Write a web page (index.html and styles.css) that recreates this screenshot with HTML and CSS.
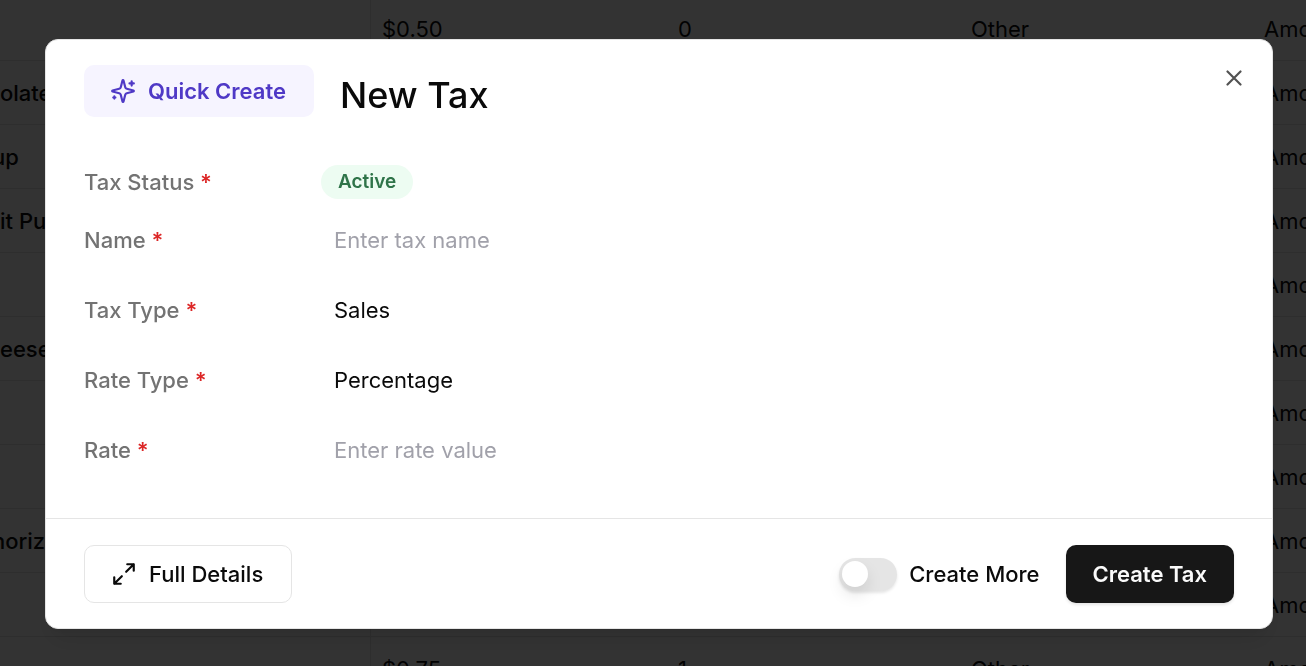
FILE: index.html
```html
<!DOCTYPE html>
<html lang="en">
<head>
<meta charset="utf-8">
<meta name="viewport" content="width=device-width, initial-scale=1">
<title>New Tax</title>
<link rel="stylesheet" href="styles.css">
</head>
<body>
<div class="page">
  <table class="modifiers">
    <colgroup><col class="col-name"><col class="col-price"><col class="col-count"><col class="col-kind"><col class="col-basis"></colgroup>
    <tbody>
      <tr><td></td><td>$0.50</td><td>0</td><td>Other</td><td>Amo</td></tr>
      <tr><td>olate</td><td></td><td></td><td></td><td>Amo</td></tr>
      <tr><td class="cut">up</td><td></td><td></td><td></td><td>Amo</td></tr>
      <tr><td>it Pu</td><td></td><td></td><td></td><td>Amo</td></tr>
      <tr><td></td><td></td><td></td><td></td><td>Amo</td></tr>
      <tr><td>eese</td><td></td><td></td><td></td><td>Amo</td></tr>
      <tr><td></td><td></td><td></td><td></td><td>Amo</td></tr>
      <tr><td></td><td></td><td></td><td></td><td>Amo</td></tr>
      <tr><td class="cut">horize</td><td></td><td></td><td></td><td>Amo</td></tr>
      <tr><td></td><td></td><td></td><td></td><td>Amo</td></tr>
      <tr><td></td><td>$0.75</td><td>1</td><td>Other</td><td>Amo</td></tr>
    </tbody>
  </table>
</div>

<div class="overlay">
  <form class="dialog" role="dialog" aria-labelledby="dialog-title">
    <header class="dialog-header">
      <span class="quick-create">
        <svg class="icon" viewBox="0 0 24 24" aria-hidden="true"><path d="M9.937 15.5A2 2 0 0 0 8.5 14.063l-6.135-1.582a.5.5 0 0 1 0-.962L8.5 9.936A2 2 0 0 0 9.937 8.5l1.582-6.135a.5.5 0 0 1 .963 0L14.063 8.5A2 2 0 0 0 15.5 9.937l6.135 1.581a.5.5 0 0 1 0 .964L15.5 14.063a2 2 0 0 0-1.437 1.437l-1.582 6.135a.5.5 0 0 1-.963 0z"/><path d="M20 3v4M22 5h-4M4 17v2M5 18H3"/></svg>
        Quick Create
      </span>
      <h1 class="title" id="dialog-title">New Tax</h1>
      <button class="close" type="button" aria-label="Close">
        <svg class="icon" viewBox="0 0 24 24" aria-hidden="true"><path d="M18 6 6 18M6 6l12 12"/></svg>
      </button>
    </header>

    <div class="fields">
      <label class="label" for="status">Tax Status <span class="required">*</span></label>
      <button class="status" id="status" type="button">Active</button>

      <label class="label" for="name">Name <span class="required">*</span></label>
      <input class="control" id="name" type="text" placeholder="Enter tax name">

      <label class="label" for="tax-type">Tax Type <span class="required">*</span></label>
      <select class="control" id="tax-type"><option>Sales</option></select>

      <label class="label" for="rate-type">Rate Type <span class="required">*</span></label>
      <select class="control" id="rate-type"><option>Percentage</option></select>

      <label class="label" for="rate">Rate <span class="required">*</span></label>
      <input class="control" id="rate" type="text" placeholder="Enter rate value">
    </div>

    <footer class="dialog-footer">
      <button class="button" type="button">
        <svg class="icon" viewBox="0 0 24 24" aria-hidden="true"><path d="M15 3h6v6M9 21H3v-6M21 3l-7 7M3 21l7-7"/></svg>
        Full Details
      </button>
      <div class="actions">
        <label class="toggle"><input class="switch" type="checkbox" role="switch">Create More</label>
        <button class="button button-primary" type="submit">Create Tax</button>
      </div>
    </footer>
  </form>
</div>
</body>
</html>
```
FILE: styles.css
```css
* {
  box-sizing: border-box;
}

body {
  margin: 0;
  height: 100vh;
  overflow: hidden;
  background: #fff;
  color: #0a0a0a;
  font: 400 22px/32px Inter, "Liberation Sans", sans-serif;
}

button, input, select {
  margin: 0;
  font: inherit;
  color: inherit;
}

.page {
  height: 100%;
  overflow: hidden;
}

/* The list is scrolled, so its first row starts above the window. */
.modifiers {
  width: 110%;
  margin-top: -3px;
  table-layout: fixed;
  border-collapse: separate;
  border-spacing: 0;
}

.col-name { width: 371px; }
.col-price { width: 296px; }
.col-count { width: 293px; }
.col-kind { width: 293px; }

.modifiers td {
  height: 64px;
  padding: 0 0 0 11px;
  border-bottom: 1px solid #e5e5e5;
}

.modifiers td:first-child {
  padding-left: 0;
  border-right: 1px solid #e5e5e5;
  font-weight: 500;
}

.modifiers td.cut {
  text-indent: -8px;
}

.overlay {
  position: fixed;
  inset: 0;
  padding: 39px 33px 37px 45px;
  background: rgba(0, 0, 0, 0.8);
}

.dialog {
  border: 1px solid #e5e5e5;
  border-radius: 13px;
  background: #fff;
  box-shadow: 0 16px 24px -5px rgba(0, 0, 0, 0.1), 0 6px 10px -6px rgba(0, 0, 0, 0.1);
}

.icon {
  display: block;
  flex: none;
  width: 26px;
  height: 26px;
  fill: none;
  stroke: currentColor;
  stroke-width: 2;
  stroke-linecap: round;
  stroke-linejoin: round;
}

.dialog-header {
  display: flex;
  align-items: flex-start;
  gap: 26px;
  padding: 25px 25px 48px 38px;
}

.quick-create {
  display: flex;
  align-items: center;
  gap: 12px;
  height: 52px;
  padding: 0 28px 0 26px;
  border-radius: 10px;
  background: #f6f4ff;
  color: #4f39c6;
  font-weight: 600;
}

.title {
  margin: 0;
  padding-top: 8px;
  font-size: 36px;
  line-height: 44px;
  font-weight: 500;
}

.close {
  margin-left: auto;
  padding: 0;
  border: 0;
  background: none;
  opacity: 0.7;
}

.fields {
  display: grid;
  grid-template-columns: 224px 1fr;
  align-items: center;
  gap: 12px 13px;
  padding: 0 38px 39px;
}

.label {
  color: #737373;
  font-weight: 500;
}

.required {
  color: #dc2626;
  font-weight: 600;
}

.status {
  justify-self: start;
  height: 34px;
  padding: 0 17px;
  border: 0;
  border-radius: 17px;
  background: #edfcf2;
  color: #2f7449;
  font-size: 19px;
  line-height: 32px;
  font-weight: 600;
}

.control {
  width: 100%;
  height: 58px;
  padding: 0 13px;
  border: 0;
  border-radius: 10px;
  background: none;
  appearance: none;
}

.control::placeholder {
  color: #a1a1aa;
  opacity: 1;
}

.dialog-footer {
  display: flex;
  align-items: center;
  justify-content: space-between;
  padding: 26px 38px 25px;
  border-top: 1px solid #e5e5e5;
}

.actions {
  display: flex;
  align-items: center;
  gap: 26px;
}

.button {
  display: flex;
  align-items: center;
  gap: 12px;
  height: 58px;
  padding: 0 28px 0 26px;
  border: 1px solid #e5e5e5;
  border-radius: 10px;
  background: #fff;
  font-weight: 500;
}

.button-primary {
  padding: 0 27px;
  border: 0;
  background: #171717;
  color: #fafafa;
  font-weight: 600;
  box-shadow: 0 2px 3px rgba(0, 0, 0, 0.1);
}

.toggle {
  display: flex;
  align-items: center;
  gap: 12px;
  font-weight: 500;
}

.switch {
  display: flex;
  align-items: center;
  width: 58px;
  height: 33px;
  padding: 0 3px;
  border-radius: 17px;
  background: #e5e5e5;
  box-shadow: 0 2px 3px rgba(0, 0, 0, 0.1);
  appearance: none;
}

.switch::before {
  content: "";
  width: 26px;
  height: 26px;
  border-radius: 50%;
  background: #fff;
  box-shadow: 0 8px 16px rgba(0, 0, 0, 0.1);
}

.switch:checked {
  justify-content: flex-end;
  background: #171717;
}
```
